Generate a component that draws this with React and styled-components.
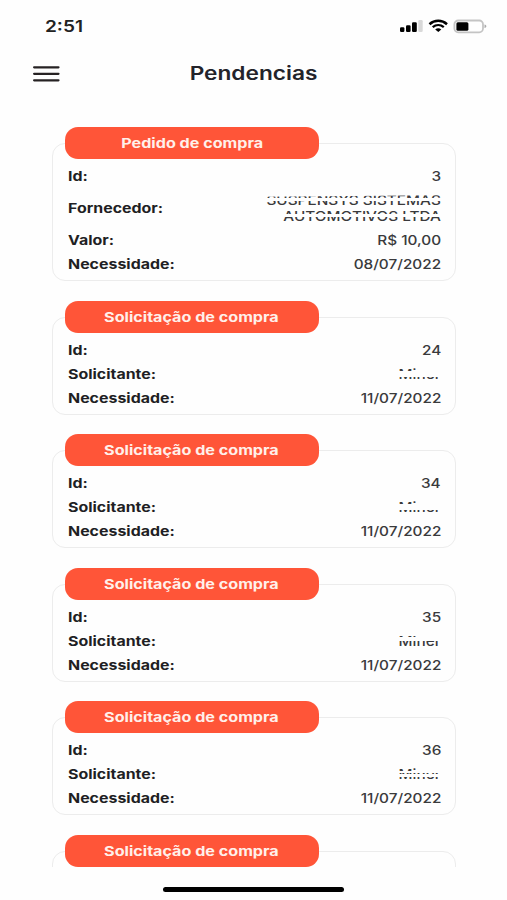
import React from "react";
import styled, { createGlobalStyle } from "styled-components";

const orders = [
  {
    title: "Pedido de compra",
    rows: [
      { label: "Id:", value: "3" },
      {
        label: "Fornecedor:",
        value: "SUSPENSYS SISTEMAS\nAUTOMOTIVOS LTDA",
        stripes: [
          [1.6, 2, -0.4],
          [6, 2.5, 0],
          [22, 3, 0],
        ],
      },
      { label: "Valor:", value: "R$ 10,00" },
      { label: "Necessidade:", value: "08/07/2022" },
    ],
  },
  {
    title: "Solicitação de compra",
    rows: [
      { label: "Id:", value: "24" },
      { label: "Solicitante:", value: "Miner", stripes: [[5, 6, 0]] },
      { label: "Necessidade:", value: "11/07/2022" },
    ],
  },
  {
    title: "Solicitação de compra",
    rows: [
      { label: "Id:", value: "34" },
      { label: "Solicitante:", value: "Miner", stripes: [[5, 5.5, 0]] },
      { label: "Necessidade:", value: "11/07/2022" },
    ],
  },
  {
    title: "Solicitação de compra",
    rows: [
      { label: "Id:", value: "35" },
      { label: "Solicitante:", value: "Miner", stripes: [[0, 3, 0], [4, 4, 0]] },
      { label: "Necessidade:", value: "11/07/2022" },
    ],
  },
  {
    title: "Solicitação de compra",
    rows: [
      { label: "Id:", value: "36" },
      { label: "Solicitante:", value: "Miner", stripes: [[5.2, 1.6, 0], [8, 3, 0]] },
      { label: "Necessidade:", value: "11/07/2022" },
    ],
  },
  { title: "Solicitação de compra", rows: [] },
];

const StatusIcons = () => (
  <svg width="88" height="16" viewBox="0 0 88 16" fill="none">
    <rect x="0" y="9.3" width="4.4" height="4.7" rx="1.2" fill="#000" />
    <rect x="6" y="7.3" width="4.6" height="6.7" rx="1.2" fill="#000" />
    <rect x="12" y="4.3" width="4.8" height="9.7" rx="1.2" fill="#000" />
    <rect x="18.3" y="2" width="4.4" height="12" rx="1.2" fill="#d9d9d9" />
    <path d="M29.5 6.2C34.5 1.7 42 1.7 47 6.2" stroke="#000" strokeWidth="2.5" />
    <path d="M32.7 9.2C36 6.4 40.5 6.4 43.8 9.2" stroke="#000" strokeWidth="2.3" />
    <path d="M35.2 11.4C37.2 10 39.3 10 41.3 11.4L38.3 14Z" fill="#000" />
    <rect x="54.4" y="2.5" width="28.6" height="11.8" rx="3.8" stroke="#c4c4c4" strokeWidth="1.8" />
    <rect x="56.4" y="4.2" width="12" height="8.6" rx="1.5" fill="#000" />
    <path d="M84.5 6.5C87 7 87 9.5 84.5 10Z" fill="#aaa" />
  </svg>
);

const MenuIcon = () => (
  <svg width="27" height="18" viewBox="0 0 27 18" stroke="#262223" strokeWidth="2.2" strokeLinecap="round">
    <path d="M1.1 2.3H25.5M1.1 8.8H25.5M1.1 15.3H25.5" />
  </svg>
);

const Card = ({ title, rows }) => (
  <CardWrapper>
    <CardTitle>
      <TitleText>{title}</TitleText>
    </CardTitle>
    {rows.map(({ label, value, stripes }) => (
      <Row key={label} $tall={value.includes("\n")}>
        <Label>{label}</Label>
        <ValueBox>
          <Value>{value}</Value>
          {stripes &&
            stripes.map(([top, height, tilt], i) => (
              <Stripe key={i} $top={top} $height={height} $tilt={tilt} />
            ))}
        </ValueBox>
      </Row>
    ))}
  </CardWrapper>
);

const App = () => (
  <Screen>
    <GlobalStyle />
    <StatusBar>
      <Clock>2:51</Clock>
      <StatusIcons />
    </StatusBar>
    <Header>
      <MenuButton aria-label="Menu">
        <MenuIcon />
      </MenuButton>
      <PageTitle>Pendencias</PageTitle>
    </Header>
    <List>
      {orders.map((order, index) => (
        <Card key={index} {...order} />
      ))}
    </List>
    <HomeIndicator />
  </Screen>
);

const GlobalStyle = createGlobalStyle`
  * {
    box-sizing: border-box;
  }

  body {
    margin: 0;
    background: #fefefe;
    font-family: Inter, "Liberation Sans", sans-serif;
  }
`;

const Screen = styled.div`
  display: flex;
  flex-direction: column;
  width: 507px;
  height: 900px;
  overflow: hidden;
`;

const StatusBar = styled.div`
  display: flex;
  justify-content: space-between;
  align-items: center;
  height: 52px;
  padding: 0 19px 0 45px;
`;

const Clock = styled.span`
  font-size: 16px;
  font-weight: 600;
  color: #222;
  transform: scaleX(1.19);
  transform-origin: left;
`;

const Header = styled.div`
  display: grid;
  grid-template-columns: 60px 1fr 60px;
  align-items: center;
  height: 42px;
`;

const MenuButton = styled.button`
  display: flex;
  width: 27px;
  margin: 2px 0 0 33px;
  padding: 0;
  border: none;
  background: none;
`;

const PageTitle = styled.h1`
  margin: 0;
  font-size: 18.5px;
  font-weight: 600;
  text-align: center;
  color: #23232a;
  transform: scaleX(1.225);
`;

const List = styled.div`
  display: flex;
  flex-direction: column;
  gap: 19.5px;
  height: 773px;
  padding: 33px 51px 0 52px;
  overflow: hidden;
`;

/* The border starts halfway down the title pill */
const CardWrapper = styled.div`
  position: relative;
  flex-shrink: 0;
  min-height: 114px;
  padding: 0 15px 5px 16px;

  &::before {
    content: "";
    position: absolute;
    inset: 16px 0 0;
    border: 1px solid #ececec;
    border-radius: 13px;
  }
`;

const CardTitle = styled.div`
  position: relative;
  display: flex;
  justify-content: center;
  align-items: center;
  width: 253.5px;
  height: 32px;
  margin: 0 0 5px -3px;
  border-radius: 13px;
  background: #ff5538;
`;

const TitleText = styled.span`
  font-size: 13px;
  font-weight: 650;
  color: #fff0ea;
  white-space: nowrap;
  transform: scaleX(1.24);
`;

const Row = styled.div`
  display: flex;
  justify-content: space-between;
  align-items: center;
  height: ${({ $tall }) => ($tall ? 40 : 24)}px;
`;

const Label = styled.span`
  font-size: 13px;
  font-weight: 650;
  color: #1f1f24;
  transform: scaleX(1.225);
  transform-origin: left;
`;

const ValueBox = styled.div`
  position: relative;
`;

const Value = styled.div`
  font-size: 13px;
  font-weight: 450;
  line-height: 16px;
  text-align: right;
  white-space: pre;
  color: #3a3a3c;
  transform: scaleX(1.18);
  transform-origin: right;
`;

/* White strokes that hide parts of a sensitive value */
const Stripe = styled.span`
  position: absolute;
  top: ${({ $top }) => $top}px;
  right: -2px;
  width: 184px;
  height: ${({ $height }) => $height}px;
  background: #fefefe;
  transform: rotate(${({ $tilt }) => $tilt}deg);
`;

const HomeIndicator = styled.div`
  width: 181px;
  height: 5px;
  margin: 20px auto 0;
  border-radius: 3px;
  background: #000;
`;

export default App;
